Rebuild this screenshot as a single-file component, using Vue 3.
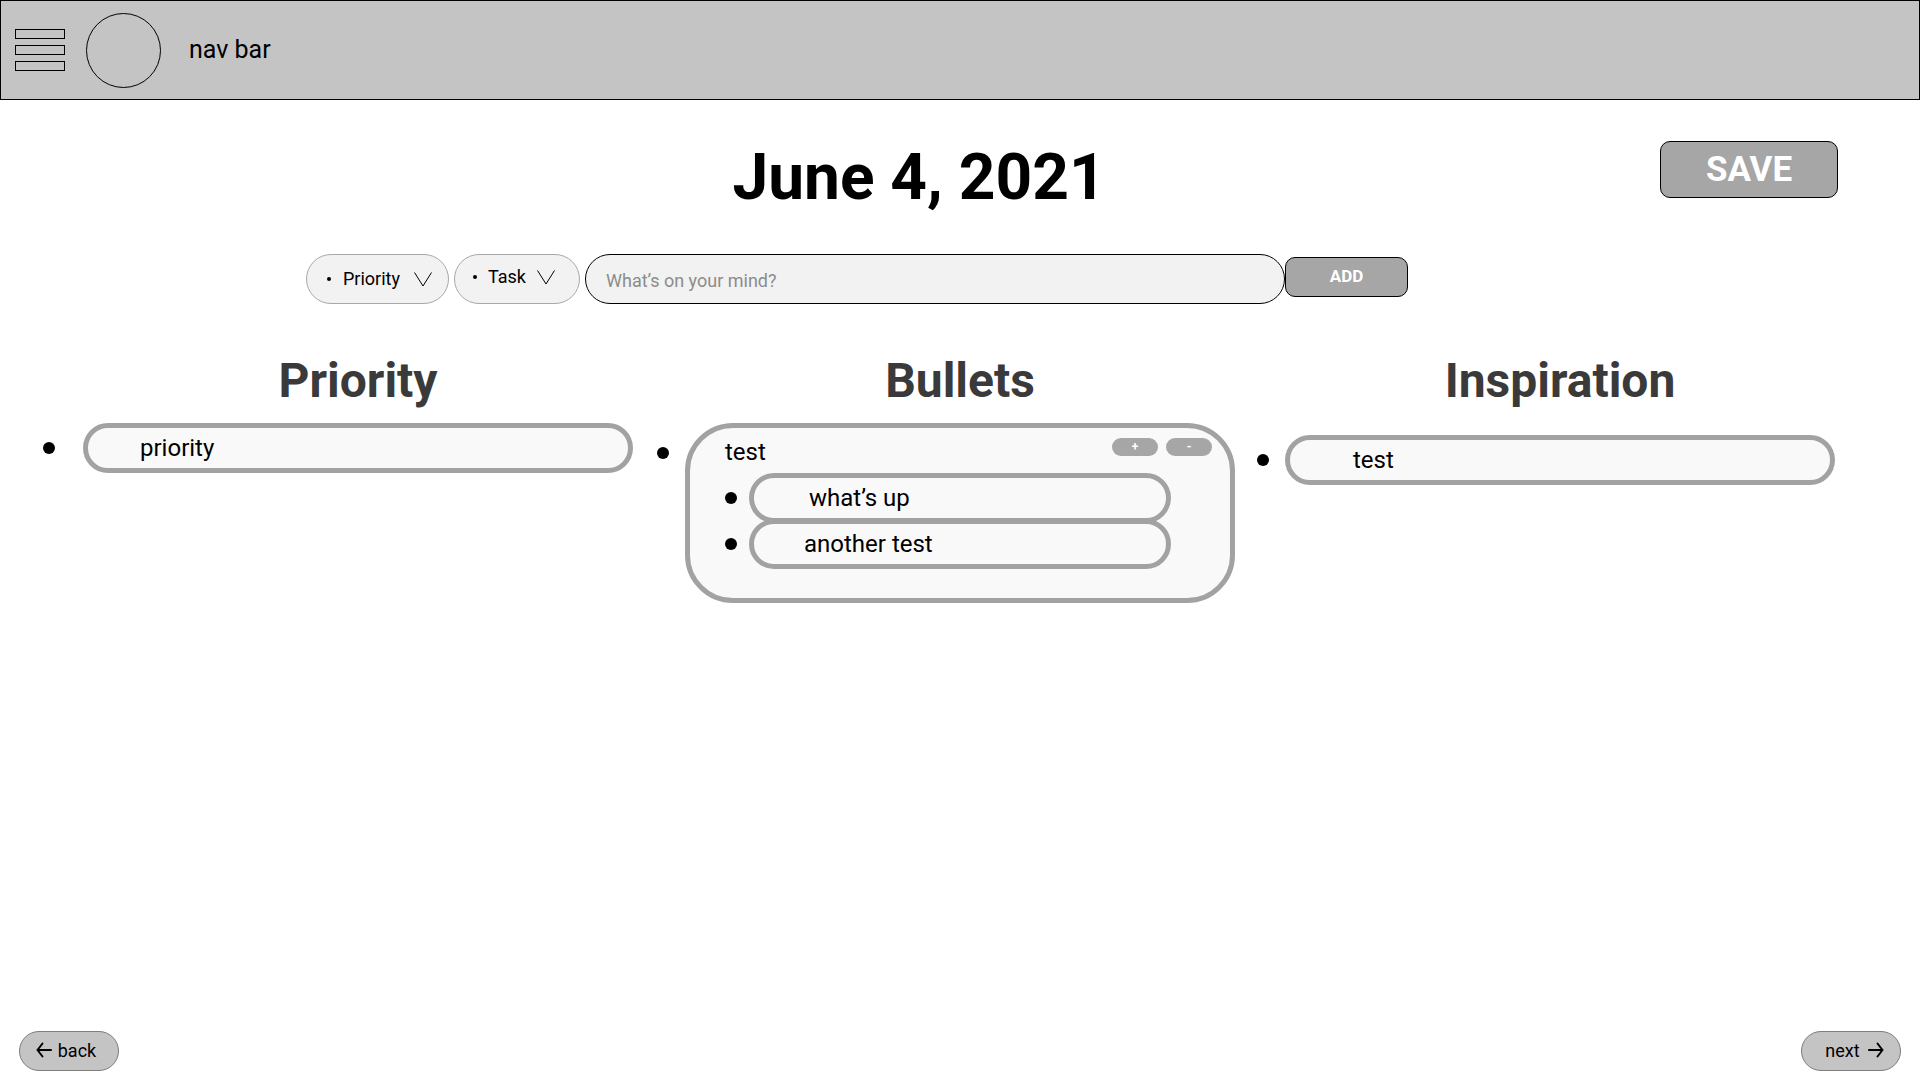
<script setup>
import { ref } from 'vue'

const category = ref('Priority')
const kind = ref('Task')
const entry = ref('')
</script>

<template>
  <div class="page">
    <nav class="navbar">
      <button class="menu" type="button" aria-label="Menu">
        <span></span><span></span><span></span>
      </button>
      <div class="avatar"></div>
      <span class="nav-label">nav bar</span>
    </nav>

    <header class="heading">
      <h1>June 4, 2021</h1>
      <button class="solid save" type="button">SAVE</button>
    </header>

    <form class="composer" @submit.prevent>
      <div class="picker picker-category">
        <i class="mark"></i>
        <select v-model="category" aria-label="Category">
          <option>Priority</option>
          <option>Bullets</option>
          <option>Inspiration</option>
        </select>
        <svg width="18" height="15" viewBox="0 0 18 15" aria-hidden="true"><path d="M.5 .5 9 14 17.500 .5" /></svg>
      </div>
      <div class="picker picker-kind">
        <i class="mark"></i>
        <select v-model="kind" aria-label="Entry type">
          <option>Task</option>
          <option>Note</option>
        </select>
        <svg width="18" height="15" viewBox="0 0 18 15" aria-hidden="true"><path d="M.5 .5 9 14 17.500 .5" /></svg>
      </div>
      <input v-model="entry" class="entry" type="text" placeholder="What’s on your mind?" aria-label="New entry" />
      <button class="solid add" type="submit">ADD</button>
    </form>

    <main class="columns">
      <section class="column priority">
        <h2>Priority</h2>
        <ul>
          <li><i class="dot"></i><div class="pill">priority</div></li>
        </ul>
      </section>

      <section class="column bullets">
        <h2>Bullets</h2>
        <ul>
          <li>
            <i class="dot"></i>
            <div class="card">
              <div class="card-head">
                <span>test</span>
                <div class="actions">
                  <button type="button">+</button>
                  <button type="button">-</button>
                </div>
              </div>
              <ul class="nested">
                <li><i class="dot"></i><div class="pill first">what’s up</div></li>
                <li><i class="dot"></i><div class="pill">another test</div></li>
              </ul>
            </div>
          </li>
        </ul>
      </section>

      <section class="column inspiration">
        <h2>Inspiration</h2>
        <ul>
          <li><i class="dot"></i><div class="pill">test</div></li>
        </ul>
      </section>
    </main>

    <footer class="pager">
      <button type="button">
        <svg width="16" height="16" viewBox="0 0 16 16" aria-hidden="true"><path d="M15 8H1.500M6.500 1.500 1.500 8l5 6.500" /></svg>
        back
      </button>
      <button class="next" type="button">
        next
        <svg width="16" height="16" viewBox="0 0 16 16" aria-hidden="true"><path d="M1 8h13.500M9.500 1.500l5 6.500-5 6.500" /></svg>
      </button>
    </footer>
  </div>
</template>

<style>
body {
  margin: 0;
  background: #fff;
}
</style>

<style scoped>
* {
  box-sizing: border-box;
}

.page {
  display: flex;
  flex-direction: column;
  min-height: 100vh;
  font-family: Roboto, "Liberation Sans", sans-serif;
  color: #000;
}

button,
select,
input {
  font-family: inherit;
  color: inherit;
  margin: 0;
  padding: 0;
}

ul {
  list-style: none;
  margin: 0;
  padding: 0;
}

.navbar {
  display: flex;
  align-items: center;
  height: 100px;
  padding: 0 14px;
  background: #c4c4c4;
  border: 1px solid #000;
}

.menu {
  display: flex;
  flex-direction: column;
  gap: 6px;
  background: none;
  border: 0;
}

.menu span {
  width: 50px;
  height: 10px;
  border: 1px solid #000;
}

.avatar {
  width: 75px;
  height: 75px;
  margin: 0 28px 0 21px;
  border: 1px solid #000;
  border-radius: 50%;
}

.nav-label {
  font-size: 25px;
  line-height: 30px;
}

.heading {
  display: grid;
  margin-top: 40px;
  padding-right: 82px;
}

.heading > * {
  grid-area: 1 / 1;
}

.heading h1 {
  justify-self: center;
  margin: 0;
  font-size: 64px;
  line-height: 76px;
}

.solid {
  color: #fff;
  font-weight: 700;
  background: #a6a6a6;
  border: 1px solid #000;
  border-radius: 10px;
}

.save {
  justify-self: end;
  width: 178px;
  height: 57px;
  margin-top: 1px;
  font-size: 35px;
}

.composer {
  display: flex;
  margin: 38px 512px 0 306px;
}

.picker {
  position: relative;
  display: flex;
  align-items: center;
  height: 50px;
  margin-right: 5px;
  background: #f2f2f2;
  border: 1px solid #a8a8a8;
  border-radius: 25px;
}

.picker-category {
  width: 143px;
}

.picker-kind {
  width: 126px;
  padding-bottom: 4px;
}

.mark {
  position: absolute;
  left: 20px;
  width: 4px;
  height: 4px;
  border-radius: 50%;
  background: #000;
  pointer-events: none;
}

.picker-kind .mark {
  left: 18px;
}

.picker select {
  appearance: none;
  width: 100%;
  height: 100%;
  padding: 0 0 2px 36px;
  font-size: 18px;
  background: none;
  border: 0;
}

.picker-kind select {
  padding-left: 33px;
}

.picker svg {
  position: absolute;
  right: 16px;
  pointer-events: none;
}

.picker-kind svg {
  right: 24px;
}

svg path {
  fill: none;
  stroke: #000;
}

.entry {
  flex: 1;
  min-width: 0;
  height: 50px;
  padding: 2px 20px 0;
  font-size: 18px;
  background: #f2f2f2;
  border: 1px solid #000;
  border-radius: 25px;
}

.entry::placeholder {
  color: #8c8c8c;
  opacity: 1;
}

.add {
  width: 123px;
  height: 40px;
  margin-top: 3px;
  padding-bottom: 3px;
  font-size: 17px;
}

.columns {
  display: grid;
  grid-template-columns: 592fr 578fr 578fr;
  gap: 22px;
  align-items: start;
  margin-top: 49px;
  padding: 0 85px 0 43px;
}

.column {
  --lead: 28px;
}

.column.priority {
  --lead: 40px;
  padding-right: 2px;
}

.column h2 {
  margin: 0 0 14px;
  padding-left: var(--lead);
  text-align: center;
  font-size: 48px;
  line-height: 56px;
  color: #3a3a3a;
}

.column.inspiration ul {
  margin-top: 26px;
}

.column li {
  display: grid;
  grid-template-columns: var(--lead) 1fr;
  align-items: center;
}

.dot {
  width: 12px;
  height: 12px;
  border-radius: 50%;
  background: #000;
}

.pill {
  height: 50px;
  padding-left: 52px;
  font-size: 24px;
  line-height: 40px;
  background: #f9f9f9;
  border: 5px solid #a2a2a2;
  border-radius: 25px;
}

.inspiration .pill {
  padding-left: 63px;
}

.card {
  height: 180px;
  padding: 8px 18px 0 35px;
  font-size: 24px;
  background: #f9f9f9;
  border: 5px solid #a2a2a2;
  border-radius: 48px;
}

.bullets > ul > li {
  align-items: start;
}

.bullets > ul > li > .dot {
  margin-top: 24px;
}

.card-head {
  display: flex;
  justify-content: space-between;
  height: 37px;
  line-height: 32px;
}

.actions {
  display: flex;
  gap: 8px;
  padding-top: 2px;
}

.actions button {
  width: 46px;
  height: 18px;
  font-size: 12px;
  font-weight: 700;
  line-height: 18px;
  color: #fff;
  background: #a6a6a6;
  border: 0;
  border-radius: 9px;
}

.nested {
  --lead: 24px;
  margin-right: 41px;
}

.nested .pill {
  padding-left: 50px;
}

.nested .first {
  padding-left: 55px;
}

.nested li + li {
  margin-top: -4px;
}

.pager {
  display: flex;
  justify-content: space-between;
  margin-top: auto;
  padding: 24px 19px 9px;
}

.pager button {
  display: flex;
  align-items: center;
  justify-content: center;
  gap: 6px;
  width: 100px;
  height: 40px;
  padding: 0 6px 2px 0;
  font-size: 18px;
  background: #c4c4c4;
  border: 1px solid #7d7d7d;
  border-radius: 20px;
}

.pager .next {
  gap: 8px;
  padding: 0 0 2px 7px;
}

.pager path {
  stroke-width: 2;
  stroke-linecap: round;
  stroke-linejoin: round;
}
</style>
